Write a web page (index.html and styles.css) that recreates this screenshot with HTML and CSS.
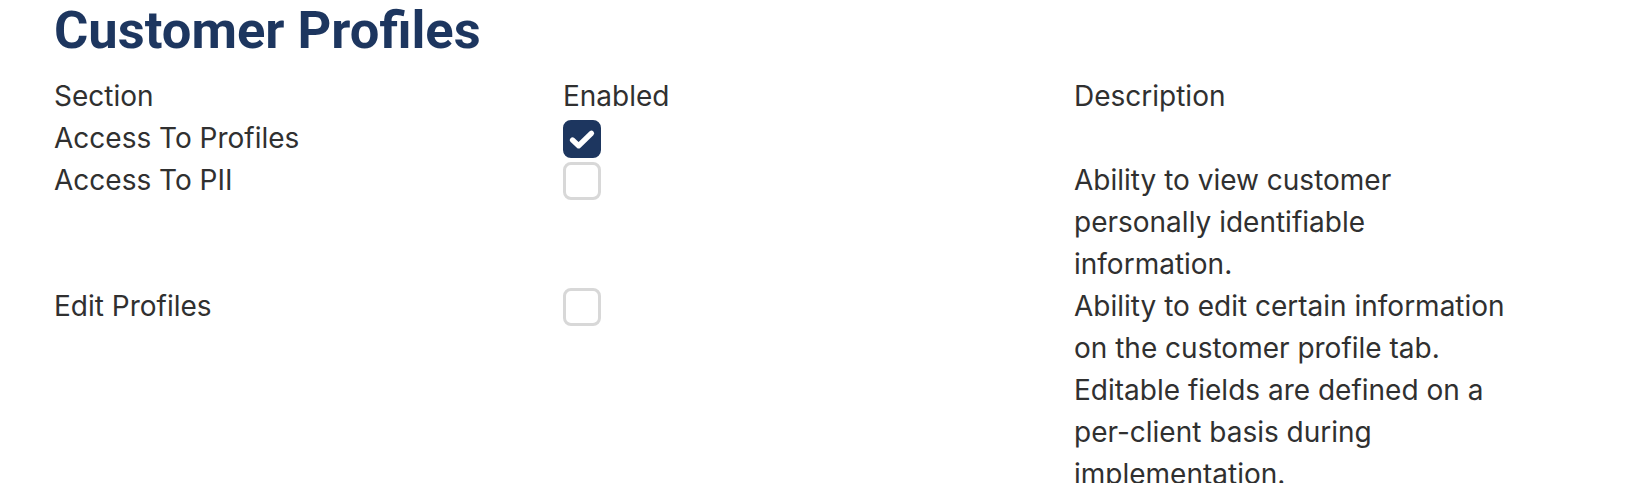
FILE: index.html
```html
<!DOCTYPE html>
<html>
<head>
<meta charset="utf-8">
<link rel="stylesheet" href="styles.css">
</head>
<body>
<div class="page">
  <h2 class="title">Customer Profiles</h2>
  <div class="table">
    <div class="cell head">Section</div>
    <div class="cell head">Enabled</div>
    <div class="cell head">Description</div>

    <div class="cell">Access To Profiles</div>
    <div class="cell"><span class="box checked"><svg viewBox="0 0 24 24" width="30" height="30"><path d="M4.4 12.8 L9.3 17.4 L19.6 7.4" fill="none" stroke="#fff" stroke-width="4.2" stroke-linecap="round" stroke-linejoin="round"/></svg></span></div>
    <div class="cell"></div>

    <div class="cell">Access To PII</div>
    <div class="cell"><span class="box"></span></div>
    <div class="cell desc">Ability to view customer personally identifiable information.</div>

    <div class="cell">Edit Profiles</div>
    <div class="cell"><span class="box"></span></div>
    <div class="cell desc">Ability to edit certain information on the customer profile tab.<br>Editable fields are defined on a per-client basis during implementation.</div>
  </div>
</div>
</body>
</html>
```
FILE: styles.css
```css
html, body {
  margin: 0;
  padding: 0;
  background: #ffffff;
}
.page {
  padding-left: 54px;
  font-family: "Inter", "Liberation Sans", sans-serif;
  color: #303030;
}
.title {
  margin: 0 0 14px 0;
  padding-top: 0;
  font-family: "Roboto", "Liberation Sans", sans-serif;
  font-weight: 700;
  font-size: 52.5px;
  line-height: 61px;
  color: #1d365f;
}
.table {
  display: grid;
  grid-template-columns: 509px 511px 450px;
  font-size: 28px;
  line-height: 42px;
}
.cell {
  min-height: 42px;
}
.box {
  display: flex;
  align-items: center;
  justify-content: center;
  box-sizing: border-box;
  width: 38px;
  height: 38px;
  margin-top: 3px;
  border: 3px solid #d8d8d8;
  border-radius: 8px;
  background: #fff;
}
.box.checked {
  border-color: #1d365f;
  background: #1d365f;
}
.box svg {
  display: block;
}
```
